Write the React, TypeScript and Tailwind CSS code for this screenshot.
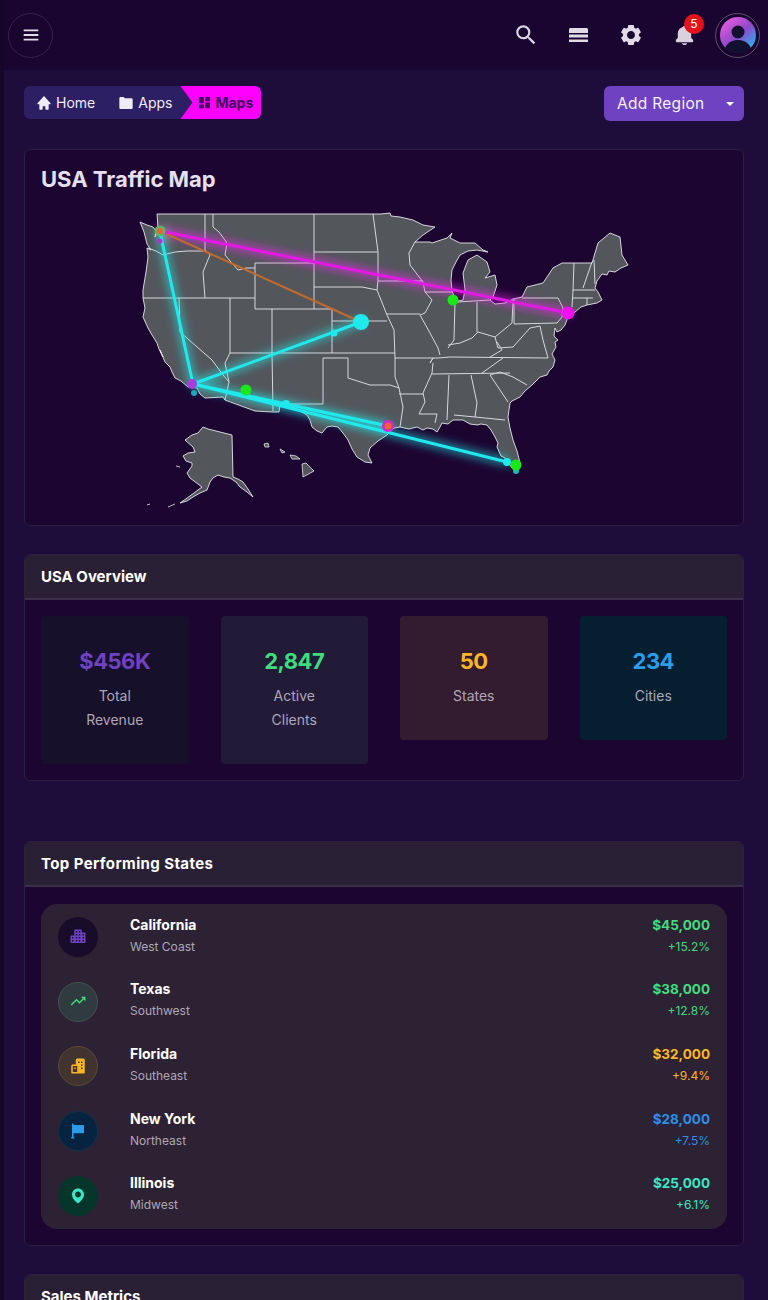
import type { ReactNode } from "react"
import {
  BiMenu,
  BiSolidCog,
  BiSolidBell,
  BiSolidHome,
  BiSolidFolder,
  BiSolidDashboard,
  BiSolidCity,
  BiTrendingUp,
  BiSolidBuildings,
  BiSolidFlag,
  BiSolidMap,
} from "react-icons/bi"
import { MdSearch } from "react-icons/md"

const usOutline =
  "M157 214 L373 214 L381 214 L390 213 L391 216 L400 217 L413 220 L423 225 L435 227 L423 235 L415 242 L430 242 L432 243 L447 238 L452 233 L450 238 L460 243 L475 243 L483 250 L488 252 L477 250 L468 251 L460 255 L456 262 L452 270 L451 280 L452 291 L455 298 L458 301 L463 300 L465 290 L463 273 L468 260 L477 255 L487 262 L490 272 L485 278 L495 275 L497 285 L493 297 L490 300 L495 304 L505 303 L513 299 L522 297 L527 287 L543 283 L553 268 L562 263 L592 263 L598 243 L610 233 L620 237 L622 255 L628 265 L621 268 L615 272 L609 271 L607 275 L602 274 L597 281 L595 288 L598 292 L602 300 L597 303 L587 305 L581 307 L575 312 L568 317 L565 325 L561 330 L557 332 L555 328 L554 336 L558 340 L555 342 L556 347 L552 354 L555 360 L553 367 L549 371 L547 375 L540 377 L532 385 L525 391 L520 397 L512 401 L510 403 L508 417 L510 428 L513 440 L517 451 L520 463 L517 472 L512 468 L505 458 L501 456 L497 447 L498 443 L495 437 L491 430 L487 425 L481 424 L477 425 L470 424 L463 420 L453 420 L448 424 L442 423 L440 427 L437 432 L433 429 L427 428 L423 430 L417 427 L409 429 L400 427 L394 428 L387 435 L378 441 L370 448 L368 455 L372 463 L365 462 L357 457 L352 449 L348 440 L343 433 L338 427 L332 426 L327 427 L322 433 L317 431 L312 427 L310 420 L307 415 L300 411 L293 407 L287 405 L280 405 L279 412 L273 412 L255 411 L225 400 L223 397 L205 398 L200 394 L197 388 L188 387 L181 381 L175 378 L172 372 L170 367 L165 362 L160 350 L163 357 L159 349 L157 343 L152 335 L148 328 L143 317 L145 308 L143 298 L143 290 L146 272 L148 257 L147 248 L151 250 L147 244 L144 232 L140 222 L147 225 L153 227 L156 231 L155 237 L158 228 Z"

const alaska =
  "M203 427 L208 429 L232 435 L233 477 L238 479 L243 482 L248 489 L253 497 L247 492 L240 487 L236 482 L230 478 L224 477 L218 475 L213 478 L210 482 L207 490 L200 493 L193 497 L187 501 L180 503 L190 496 L202 487 L198 484 L190 478 L187 473 L192 466 L192 463 L186 461 L183 456 L188 453 L195 452 L193 447 L185 440 L192 435 L198 433 Z"

const hawaii = [
  "M302 464 L306 463 L314 471 L303 477 Z",
  "M290 455 L296 456 L300 459 L292 459 Z",
  "M280 449 L285 452 L282 453 Z",
  "M264 444 L268 443 L269 447 L265 447 Z",
]

const stateLines = [
  "M205 214 L205 250 L210 255 L207 262 L203 272 L205 298",
  "M213 214 L213 227 L219 232 L227 243 L225 255 L231 262 L238 270 L246 268 L253 268 L255 268",
  "M148 248 L156 251 L163 255 L175 252 L187 251 L205 251",
  "M143 298 L255 298",
  "M179 298 L180 332 L212 360 L223 375 L229 382 L225 400",
  "M230 298 L230 353 L225 363 L229 382",
  "M255 263 L314 263 L314 309 L255 309 Z",
  "M272 309 L272 353 L273 411",
  "M230 353 L395 353",
  "M314 309 L332 309 L332 353",
  "M332 321 L387 321",
  "M314 214 L314 263",
  "M314 252 L378 252",
  "M314 287 L362 287 L377 290 L387 315",
  "M373 214 L378 252 L378 280 L377 290",
  "M378 281 L423 281",
  "M415 242 L409 253 L410 265 L423 282 L425 292 L432 300 L425 313 L420 315",
  "M387 314 L420 314",
  "M425 292 L452 292",
  "M455 302 L454 340 L448 348",
  "M420 315 L430 333 L438 348 L440 355",
  "M458 302 L490 300",
  "M477 302 L477 332",
  "M448 345 L460 343 L472 338 L478 332 L495 337 L512 323 L513 300",
  "M514 299 L514 324 L557 323",
  "M522 298 L558 298 L563 308 L562 317 L557 323",
  "M574 263 L573 290 L572 307",
  "M592 262 L583 288",
  "M594 260 L595 284",
  "M573 290 L595 290",
  "M573 298 L593 298",
  "M587 298 L587 305",
  "M387 315 L394 330 L395 358 L395 377 L399 388 L403 407 L400 427",
  "M395 358 L433 358 L430 363 L433 358 L438 358 L450 357 L548 358",
  "M323 358 L348 358 L348 378 L370 385 L390 385 L399 388",
  "M323 358 L323 404 L287 404 L280 405",
  "M399 394 L423 394",
  "M433 363 L432 373 L423 393 L425 402 L419 414 L437 414 L435 423",
  "M432 374 L510 373",
  "M490 375 L508 402",
  "M490 375 L500 372 L513 377 L527 385",
  "M449 375 L447 420",
  "M471 375 L477 403 L475 417",
  "M454 415 L475 417 L505 420",
  "M482 373 L503 358",
  "M495 337 L498 348 L513 347 L530 328 L540 326",
  "M497 342 L502 350 L490 357",
  "M540 326 L543 340 L548 358",
]

type Dot = { x: number; y: number; r: number; fill: string }

const dots: Dot[] = [
  { x: 160, y: 231, r: 5.5, fill: "#5fb36a" },
  { x: 160, y: 231, r: 3, fill: "#f0622c" },
  { x: 160, y: 241, r: 2.5, fill: "#cc22dd" },
  { x: 192, y: 384, r: 5, fill: "#a83cdc" },
  { x: 194, y: 393, r: 3, fill: "#1aa8bc" },
  { x: 246, y: 390, r: 5.5, fill: "#18e818" },
  { x: 286, y: 404, r: 4, fill: "#1fe9ec" },
  { x: 334, y: 333, r: 3.5, fill: "#1fe9ec" },
  { x: 361, y: 322, r: 8, fill: "#1fe9ec" },
  { x: 388, y: 426, r: 6, fill: "#d422d8" },
  { x: 388, y: 426, r: 3.5, fill: "#f0622c" },
  { x: 453, y: 300, r: 5.5, fill: "#18e818" },
  { x: 507, y: 462, r: 4, fill: "#1fe9ec" },
  { x: 516, y: 471, r: 3, fill: "#1ab8b8" },
  { x: 516, y: 465, r: 5.5, fill: "#18e818" },
  { x: 568, y: 313, r: 6.5, fill: "#f010f0" },
]

function UsaMap() {
  return (
    <svg viewBox="130 205 510 305" className="mt-[11px] block h-[305px] w-[510px]">
      <defs>
        <filter id="glow" x="-30%" y="-30%" width="160%" height="160%">
          <feGaussianBlur stdDeviation="5" />
        </filter>
      </defs>
      <path d={usOutline} fill="#53575c" stroke="#e8e8ee" strokeWidth="0.9" strokeLinejoin="round" />
      <path d={alaska} fill="#53575c" stroke="#e8e8ee" strokeWidth="0.9" strokeLinejoin="round" />
      {hawaii.map((d) => (
        <path key={d} d={d} fill="#53575c" stroke="#e8e8ee" strokeWidth="0.8" />
      ))}
      <path d="M175 504 L168 507 M150 504 L147 505 M176 466 L180 467" stroke="#e8e8ee" strokeWidth="0.8" fill="none" />
      {stateLines.map((d) => (
        <path key={d} d={d} fill="none" stroke="#d8d8dc" strokeWidth="1" strokeLinejoin="round" />
      ))}
      <g filter="url(#glow)" opacity="0.75" strokeLinecap="round">
        <line x1="160" y1="231" x2="568" y2="313" stroke="#ff20ff" strokeWidth="6" />
        <line x1="160" y1="232" x2="193" y2="384" stroke="#20f0f0" strokeWidth="6" />
        <line x1="193" y1="384" x2="361" y2="322" stroke="#20f0f0" strokeWidth="6" />
        <line x1="193" y1="384" x2="388" y2="426" stroke="#20f0f0" strokeWidth="6" />
        <line x1="193" y1="384" x2="507" y2="462" stroke="#20f0f0" strokeWidth="6" />
      </g>
      <line x1="160" y1="231" x2="361" y2="322" stroke="#c46a2a" strokeWidth="2" />
      <line x1="160" y1="231" x2="568" y2="313" stroke="#e41ae4" strokeWidth="3" />
      <line x1="160" y1="232" x2="193" y2="384" stroke="#1fe9ec" strokeWidth="3" />
      <line x1="193" y1="384" x2="361" y2="322" stroke="#1fe9ec" strokeWidth="3" />
      <line x1="193" y1="384" x2="388" y2="426" stroke="#1fe9ec" strokeWidth="3" />
      <line x1="193" y1="384" x2="507" y2="462" stroke="#1fe9ec" strokeWidth="3" />
      {dots.map((dot) => (
        <circle key={`${dot.x}-${dot.y}-${dot.r}`} cx={dot.x} cy={dot.y} r={dot.r} fill={dot.fill} />
      ))}
    </svg>
  )
}

function Card({ title, titleClass, children }: { title: string; titleClass?: string; children: ReactNode }) {
  return (
    <section className="rounded-md border border-[#2b2040] bg-[#1d0532]">
      <div className={`flex h-[45px] items-center rounded-t-md border-b-2 border-[#3a2e48] bg-[#2a2036] px-4 pt-[2px] text-[15px] font-bold text-white ${titleClass ?? ""}`}>
        {title}
      </div>
      {children}
    </section>
  )
}

const stats = [
  { value: "$456K", label: "Total Revenue", bg: "bg-[#17102a]", color: "text-[#6f42c1]" },
  { value: "2,847", label: "Active Clients", bg: "bg-[#221b38]", color: "text-[#3fdc7c]" },
  { value: "50", label: "States", bg: "bg-[#341c30]", color: "text-[#fdb524]" },
  { value: "234", label: "Cities", bg: "bg-[#051f30]", color: "text-[#2b9de8]" },
]

const states = [
  { name: "California", region: "West Coast", amount: "$45,000", change: "+15.2%", color: "text-[#3fdc7c]", circle: "bg-[#170c2a]", iconColor: "text-[#6f42c1]", icon: BiSolidCity },
  { name: "Texas", region: "Southwest", amount: "$38,000", change: "+12.8%", color: "text-[#3fdc7c]", circle: "bg-[#2f3b3e] border border-[#415250]", iconColor: "text-[#3fdc7c]", icon: BiTrendingUp },
  { name: "Florida", region: "Southeast", amount: "$32,000", change: "+9.4%", color: "text-[#fdb524]", circle: "bg-[#413430] border border-[#5c4a35]", iconColor: "text-[#fdb524]", icon: BiSolidBuildings },
  { name: "New York", region: "Northeast", amount: "$28,000", change: "+7.5%", color: "text-[#2b8fe8]", circle: "bg-[#06233f] border border-[#0d3350]", iconColor: "text-[#2b9de8]", icon: BiSolidFlag },
  { name: "Illinois", region: "Midwest", amount: "$25,000", change: "+6.1%", color: "text-[#39e6c8]", circle: "bg-[#063529]", iconColor: "text-[#39e6c8]", icon: BiSolidMap },
]

export default function App() {
  return (
    <div className="h-[1300px] overflow-hidden border-l-4 border-[#170628] bg-[#1e0c3b] font-['Inter',sans-serif] text-white">
      <header className="-ml-1 flex h-[70px] items-center justify-between bg-[#1a0530] pl-2 pr-2">
        <button className="flex h-[45px] w-[45px] items-center justify-center rounded-full border border-[#33234a] text-[#e3dde8]">
          <BiMenu size={22} />
        </button>
        <div className="flex items-center">
          <MdSearch size={26} className="mr-[30px] text-[#dcd6e4]" />
          <svg viewBox="0 0 19 14" className="mr-[31px] h-[14px] w-[19px] text-[#e0dbe6]" fill="currentColor">
            <path d="M1 0H18L19 1V5H0V1Z" />
            <rect y="6.5" width="19" height="3" />
            <path d="M0 11.5H19V14H0Z" />
          </svg>
          <BiSolidCog size={24} className="mr-[30px] text-[#e0dbe6]" />
          <div className="relative mr-[19px]">
            <BiSolidBell size={23} className="text-[#d9d2de]" />
            <span className="absolute -right-[8px] -top-[10px] flex h-5 w-5 items-center justify-center rounded-full bg-[#e3141c] text-[12px] text-white">
              5
            </span>
          </div>
          <div className="flex h-[45px] w-[45px] items-center justify-center rounded-full border border-[#5d5168]">
            <svg viewBox="0 0 36 36" className="h-9 w-9">
              <defs>
                <linearGradient id="avatar" x1="0.2" y1="0" x2="0.9" y2="0.8">
                  <stop offset="0" stopColor="#e85ce0" />
                  <stop offset="0.55" stopColor="#9048c8" />
                  <stop offset="1" stopColor="#30a8ec" />
                </linearGradient>
              </defs>
              <circle cx="18" cy="18" r="18" fill="url(#avatar)" />
              <circle cx="18" cy="15" r="6.5" fill="#12102e" />
              <path d="M5 31 C8 25 13 23 18 23 C23 23 28 25 31 31 A18 18 0 0 1 5 31Z" fill="#12102e" />
            </svg>
          </div>
        </div>
      </header>

      <main className="pl-5 pr-6">
        <div className="flex items-start justify-between pt-4">
          <nav className="flex h-[33px] items-center overflow-hidden rounded-md bg-[#2d1f63] text-[14px]">
            <span className="flex items-center gap-1 pl-3 text-[#f0ecf6]">
              <BiSolidHome size={16} />
              Home
            </span>
            <span className="ml-[23px] flex items-center gap-1 text-[#f0ecf6]">
              <BiSolidFolder size={16} />
              Apps
            </span>
            <span className="ml-2 flex h-full items-center gap-[3px] bg-[#ff00ff] pl-[17px] pr-2 font-bold text-[#3d0a5e] [clip-path:polygon(0_0,100%_0,100%_100%,0_100%,12px_50%)]">
              <BiSolidDashboard size={15} />
              <span className="text-[14px]">Maps</span>
            </span>
          </nav>
          <button className="flex h-[35px] w-[140px] items-center justify-between rounded-md bg-[#6f42c1] pl-[13px] pr-[10px] text-[15.5px] tracking-[0.3px] text-[#f4f0fa]">
            Add Region
            <span className="h-0 w-0 border-x-4 border-t-4 border-x-transparent border-t-white" />
          </button>
        </div>

        <section className="mt-[28px] h-[377px] rounded-md border border-[#2b2040] bg-[#1d0532] px-4 pt-[14px]">
          <h2 className="text-[22px] font-bold leading-[30px] text-[#e6e0ee]">USA Traffic Map</h2>
          <div className="ml-[89px]">
            <UsaMap />
          </div>
        </section>

        <div className="mt-7">
          <Card title="USA Overview">
            <div className="grid grid-cols-4 items-start gap-8 p-4">
              {stats.map((s) => (
                <div key={s.value} className={`rounded ${s.bg} px-8 pb-8 pt-6 text-center`}>
                  <div className={`text-[22px] font-bold leading-[42px] tracking-[-0.5px] ${s.color}`}>{s.value}</div>
                  <div className="mt-[2px] text-[14px] leading-6 text-[#ada6b6]">{s.label}</div>
                </div>
              ))}
            </div>
          </Card>
        </div>

        <div className="mt-[60px]">
          <Card title="Top Performing States" titleClass="tracking-[0.4px]">
            <div className="p-4 pt-[17px]">
              <div className="rounded-2xl bg-[#2d2233] py-[1px] pl-[17px] pr-[17px]">
                {states.map((st) => {
                  const Icon = st.icon
                  return (
                    <div key={st.name} className="flex h-[64.6px] items-center">
                      <div className={`flex h-10 w-10 shrink-0 items-center justify-center rounded-full ${st.circle}`}>
                        <Icon size={18} className={st.iconColor} />
                      </div>
                      <div className="-mt-[5px] ml-8">
                        <div className="text-[14px] font-bold leading-6 text-white">{st.name}</div>
                        <div className="text-[12px] leading-5 text-[#ada6b6]">{st.region}</div>
                      </div>
                      <div className={`-mt-[5px] ml-auto text-right ${st.color}`}>
                        <div className="text-[13.5px] font-bold leading-6">{st.amount}</div>
                        <div className="text-[12px] leading-5">{st.change}</div>
                      </div>
                    </div>
                  )
                })}
              </div>
            </div>
          </Card>
        </div>

        <div className="mt-7">
          <Card title="Sales Metrics">
            <div className="h-20" />
          </Card>
        </div>
      </main>
    </div>
  )
}
